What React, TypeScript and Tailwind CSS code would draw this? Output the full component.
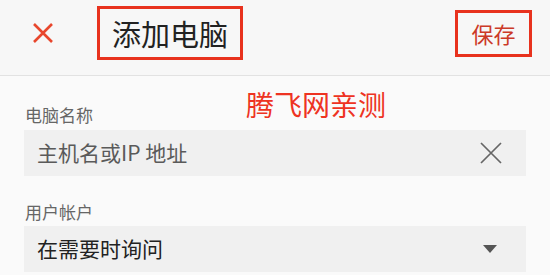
import React from "react";

export default function App() {
  const font = { fontFamily: '"Noto Sans CJK SC", "Noto Sans", sans-serif' };
  return (
    <div className="w-[550px] h-[275px] bg-[#fafafa] overflow-hidden relative" style={font}>
      <div className="h-[76px] bg-[#f7f7f7] border-b border-[#e2e2e2]">
        <div className="h-[66px] flex items-center">
          <div className="ml-[32px] w-[22px] h-[22px]">
            <svg viewBox="0 0 22 22" width="22" height="22">
              <path d="M2 2 L20 20 M20 2 L2 20" stroke="#e8472d" strokeWidth="2.6" strokeLinecap="butt" />
            </svg>
          </div>
          <div className="ml-[43px] border-[3px] border-[#e8321e] px-[12px] h-[54px] flex items-center">
            <span className="text-[29px] leading-[48px] text-[#222]">添加电脑</span>
          </div>
          <div className="ml-auto mr-[18px] border-[3px] border-[#e8321e] h-[47px] w-[77px] flex items-center justify-center">
            <span className="text-[22px] leading-[41px] text-[#cc3a28]">保存</span>
          </div>
        </div>
      </div>
      <div className="px-[24px] pt-[27px]">
        <div className="pl-[1px] text-[17px] leading-[24px] text-[#666]">电脑名称</div>
        <div className="mt-[3px] h-[46px] bg-[#f0f0f0] flex items-center pl-[13px] pr-[24px]">
          <span className="text-[21px] text-[#5a5a5a] flex-1">主机名或IP 地址</span>
          <svg viewBox="0 0 22 22" width="22" height="22">
            <path d="M1 1 L21 21 M21 1 L1 21" stroke="#666" strokeWidth="1.7" />
          </svg>
        </div>
        <div className="mt-[24px] pl-[1px] text-[17px] leading-[24px] text-[#666]">用户帐户</div>
        <div className="mt-[2px] h-[46px] bg-[#f0f0f0] flex items-center pl-[13px] pr-[29px]">
          <span className="text-[21px] text-[#222] flex-1">在需要时询问</span>
          <svg viewBox="0 0 14 8" width="14" height="8">
            <path d="M0 0 L14 0 L7 8 Z" fill="#555" />
          </svg>
        </div>
      </div>
      <div className="absolute left-[246px] top-[86px] text-[28px] leading-[36px] text-[#ee3322]">腾飞网亲测</div>
    </div>
  );
}
